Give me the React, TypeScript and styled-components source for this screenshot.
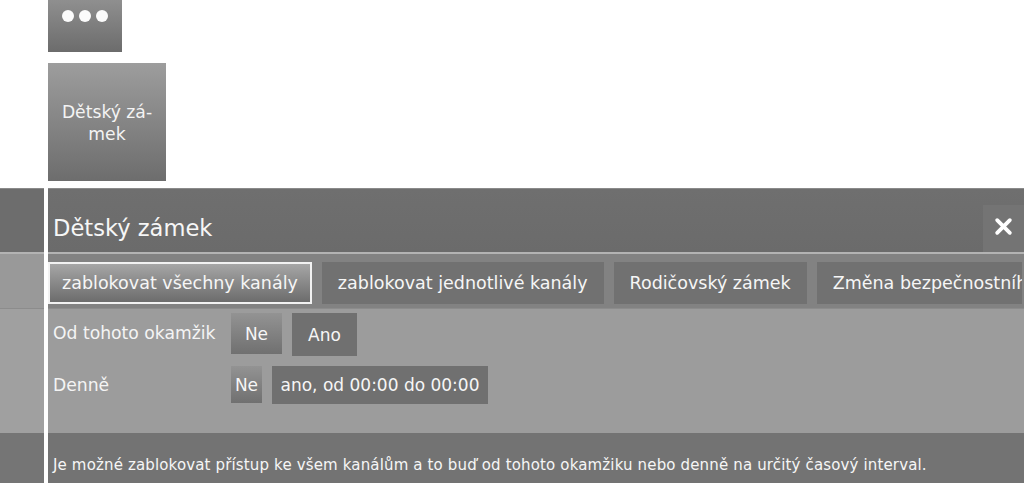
import React from "react";
import styled, { createGlobalStyle } from "styled-components";

const GlobalStyle = createGlobalStyle`
  html, body {
    margin: 0;
    padding: 0;
    background: #ffffff;
    font-family: "DejaVu Sans", "Noto Sans", sans-serif;
    color: #ffffff;
  }
  #root { width: 1024px; height: 483px; overflow: hidden; }
`;

const Page = styled.div`
  width: 1024px;
  height: 483px;
  display: flex;
  flex-direction: column;
  background: #ffffff;
  overflow: hidden;
`;

const Top = styled.div`
  height: 188px;
  padding-left: 48px;
  display: flex;
  flex-direction: column;
  align-items: flex-start;
  gap: 11px;
  box-sizing: border-box;
`;

const MoreButton = styled.div`
  width: 74px;
  height: 52px;
  background: linear-gradient(#8f8f8f, #6c6c6c);
  display: flex;
  justify-content: center;
  align-items: flex-start;
  padding-top: 10px;
  box-sizing: border-box;
  gap: 5px;
`;

const Dot = styled.span`
  width: 12px;
  height: 12px;
  border-radius: 50%;
  background: #fbfbfb;
`;

const Tile = styled.div`
  width: 118px;
  height: 118px;
  background: linear-gradient(#9d9d9d, #6d6d6d);
  display: flex;
  align-items: center;
  justify-content: center;
  text-align: center;
  font-size: 17.2px;
  line-height: 22px;
  color: #f4f4f4;
  padding-top: 2px;
  box-sizing: border-box;
`;

const Panel = styled.div`
  flex: 1;
  display: flex;
  gap: 4px;
  background: #ffffff;
`;

const Column = styled.div<{ $width?: number }>`
  display: flex;
  flex-direction: column;
  ${(p) => (p.$width ? `width: ${p.$width}px; flex: none;` : `flex: 1; min-width: 0;`)}
`;

const Header = styled.div<{ $rail?: boolean }>`
  height: 64px;
  flex: none;
  background: ${(p) => (p.$rail ? "#6d6d6d" : "linear-gradient(#6f6f6f, #6b6b6b)")};
  border-top: 1px solid #8a8a8a;
  box-sizing: border-box;
  display: flex;
  align-items: center;
  justify-content: space-between;
  padding-left: 5px;
`;

const Title = styled.div`
  font-size: 22.6px;
  color: #f6f6f6;
  margin-top: 14px;
`;

const CloseButton = styled.div`
  width: 41px;
  height: 47px;
  align-self: flex-end;
  background: #747474;
  display: flex;
  align-items: center;
  justify-content: center;
  padding-bottom: 4px;
  box-sizing: border-box;
`;

const Divider = styled.div`
  height: 2px;
  flex: none;
  background: #b3b3b3;
`;

const TabRow = styled.div<{ $rail?: boolean }>`
  height: 54px;
  flex: none;
  background: ${(p) => (p.$rail ? "#999999" : "#828282")};
  display: flex;
  gap: 10px;
  padding: 8px 2px 4px 0;
  box-sizing: border-box;
  overflow: hidden;
`;

const Tab = styled.div<{ $active?: boolean; $last?: boolean }>`
  height: 42px;
  box-sizing: border-box;
  display: flex;
  align-items: center;
  padding: 0 ${(p) => (p.$active ? 12 : 16)}px;
  font-size: 17.5px;
  white-space: nowrap;
  color: #f6f6f6;
  flex: ${(p) => (p.$last ? "1 1 auto" : "none")};
  min-width: 0;
  overflow: hidden;
  background: ${(p) =>
    p.$active ? "linear-gradient(#a6a6a6, #6c6c6c)" : "#717171"};
  border: ${(p) => (p.$active ? "2px solid #f2f2f2" : "none")};
`;

const Content = styled.div<{ $rail?: boolean }>`
  height: 125px;
  flex: none;
  background: ${(p) => (p.$rail ? "#a0a0a0" : "#9c9c9c")};
  border-top: 1px solid #8c8c8c;
  box-sizing: border-box;
  padding-top: 4px;
  display: flex;
  flex-direction: column;
  gap: 10px;
`;

const OptionRow = styled.div`
  display: flex;
  align-items: flex-start;
`;

const Label = styled.div<{ $h: number }>`
  width: 183px;
  height: ${(p) => p.$h}px;
  flex: none;
  padding-left: 5px;
  box-sizing: border-box;
  display: flex;
  align-items: center;
  font-size: 17.2px;
  color: #f4f4f4;
  padding-bottom: ${(p) => (p.$h > 40 ? 3 : 0)}px;
  white-space: nowrap;
`;

const Choices = styled.div`
  display: flex;
  gap: 10px;
  align-items: flex-start;
`;

const Choice = styled.div<{ $w: number; $h: number; $raised?: boolean }>`
  width: ${(p) => p.$w}px;
  height: ${(p) => p.$h}px;
  box-sizing: border-box;
  display: flex;
  align-items: center;
  justify-content: center;
  font-size: 17px;
  color: #f6f6f6;
  white-space: nowrap;
  background: ${(p) =>
    p.$raised ? "linear-gradient(#939393, #707070)" : "#707070"};
`;

const Footer = styled.div<{ $rail?: boolean }>`
  flex: 1;
  background: ${(p) => (p.$rail ? "#757575" : "#737373")};
  padding: 23px 0 0 5px;
  box-sizing: border-box;
  font-size: 15px;
  letter-spacing: 0.15px;
  color: #f6f6f6;
  white-space: nowrap;
`;

const CloseIcon = () => (
  <svg width="19" height="19" viewBox="0 0 18 18">
    <path
      d="M3 3 L15 15 M15 3 L3 15"
      stroke="#ffffff"
      strokeWidth="3.6"
      strokeLinecap="round"
    />
  </svg>
);

export default function App() {
  return (
    <>
      <GlobalStyle />
      <Page>
        <Top>
          <MoreButton>
            <Dot />
            <Dot />
            <Dot />
          </MoreButton>
          <Tile>
            Dětský zá-
            <br />
            mek
          </Tile>
        </Top>
        <Panel>
          <Column $width={44}>
            <Header $rail />
            <Divider />
            <TabRow $rail />
            <Content $rail />
            <Footer $rail />
          </Column>
          <Column>
            <Header>
              <Title>Dětský zámek</Title>
              <CloseButton>
                <CloseIcon />
              </CloseButton>
            </Header>
            <Divider />
            <TabRow>
              <Tab $active>zablokovat všechny kanály</Tab>
              <Tab>zablokovat jednotlivé kanály</Tab>
              <Tab>Rodičovský zámek</Tab>
              <Tab $last>Změna bezpečnostního kódu</Tab>
            </TabRow>
            <Content>
              <OptionRow>
                <Label $h={43}>Od tohoto okamžik</Label>
                <Choices>
                  <Choice $w={51} $h={41} $raised>
                    Ne
                  </Choice>
                  <Choice $w={65} $h={43}>
                    Ano
                  </Choice>
                </Choices>
              </OptionRow>
              <OptionRow>
                <Label $h={38}>Denně</Label>
                <Choices>
                  <Choice $w={31} $h={37} $raised>
                    Ne
                  </Choice>
                  <Choice $w={216} $h={38}>
                    ano, od 00:00 do 00:00
                  </Choice>
                </Choices>
              </OptionRow>
            </Content>
            <Footer>
              Je možné zablokovat přístup ke všem kanálům a to buď od tohoto
              okamžiku nebo denně na určitý časový interval.
            </Footer>
          </Column>
        </Panel>
      </Page>
    </>
  );
}
